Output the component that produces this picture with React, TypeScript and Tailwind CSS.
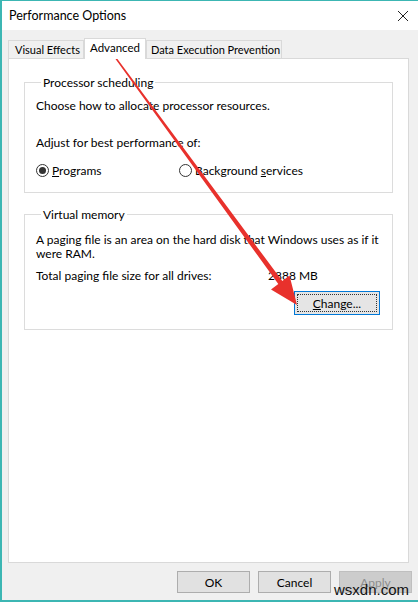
const font = "font-['Lato','Liberation_Sans',sans-serif]";

function Radio({ checked }: { checked?: boolean }) {
  return (
    <span className="flex h-[13px] w-[13px] items-center justify-center rounded-full border border-[#333] bg-white">
      {checked ? <span className="h-[7px] w-[7px] rounded-full bg-[#333]" /> : null}
    </span>
  );
}

function Button({ label, disabled }: { label: string; disabled?: boolean }) {
  return (
    <div
      className={
        disabled
          ? "flex h-[22px] w-[73px] items-center justify-center border border-[#bfbfbf] bg-[#cccccc] text-[#8c8c8c]"
          : "flex h-[22px] w-[73px] items-center justify-center border border-[#adadad] bg-[#e1e1e1]"
      }
    >
      {label}
    </div>
  );
}

export default function App() {
  return (
    <div
      className={`relative flex h-[602px] w-[418px] flex-col border-t border-b-2 border-l-2 border-[#3cb6b3] bg-[#f0f0f0] text-[12px] leading-[15px] text-black ${font}`}
    >
      {/* title bar */}
      <div className="flex h-[29px] items-center justify-between bg-white pl-[7px] pr-[8px]">
        <span className="text-[12.5px]">Performance Options</span>
        <svg width="12" height="12" viewBox="0 0 12 12" className="mr-[1px]">
          <path d="M1 1 L11 11 M11 1 L1 11" stroke="#222" strokeWidth="1" fill="none" />
        </svg>
      </div>

      {/* tabs */}
      <div className="ml-[6px] mt-[8px] flex h-[20px] items-end whitespace-nowrap text-[11px]">
        <div className="flex h-[18px] w-[76px] items-center border border-b-0 border-[#d9d9d9] bg-[#f0f0f0] pl-[6px]">
          Visual Effects
        </div>
        <div className="relative z-10 -mb-px flex h-[21px] w-[62px] items-center justify-center border border-b-0 border-[#d9d9d9] bg-white pb-[3px] text-[11.5px]">
          Advanced
        </div>
        <div className="flex h-[18px] w-[136px] items-center border border-b-0 border-[#d9d9d9] bg-[#f0f0f0] pl-[4px]">
          Data Execution Prevention
        </div>
      </div>

      {/* panel */}
      <div className="ml-[6px] mr-[9px] flex h-[505px] flex-col border border-[#d9d9d9] bg-white px-[15px] pt-[16px]">
        <fieldset className="h-[118px] border border-[#dcdcdc] pl-[11px]">
          <legend className="ml-[5px] px-[2px]">Processor scheduling</legend>
          <div className="mt-[8px]">Choose how to allocate processor resources.</div>
          <div className="mt-[22px]">Adjust for best performance of:</div>
          <div className="mt-[13px] flex items-center">
            <div className="flex w-[143px] items-center gap-[3px]">
              <Radio checked />
              <span>
                <span className="underline">P</span>rograms
              </span>
            </div>
            <div className="flex items-center gap-[3px]">
              <Radio />
              <span>
                Background <span className="underline">s</span>ervices
              </span>
            </div>
          </div>
        </fieldset>

        <fieldset className="mt-[14px] h-[123px] border border-[#dcdcdc] pl-[11px] pr-[12px]">
          <legend className="ml-[5px] px-[2px]">Virtual memory</legend>
          <div className="mt-[11px] leading-[14px]">
            A paging file is an area on the hard disk that Windows uses as if it were RAM.
          </div>
          <div className="mt-[7px] flex">
            <span className="w-[232px]">Total paging file size for all drives:</span>
            <span>2888 MB</span>
          </div>
          <div className="mt-[8px] flex justify-end">
            <div className="flex h-[24px] w-[86px] items-center justify-center border border-[#0078d7] bg-[#e5e5e5] p-[2px]">
              <div className="flex h-full w-full items-center justify-center border border-dotted border-[#333]">
                <span>
                  <span className="underline">C</span>hange...
                </span>
              </div>
            </div>
          </div>
        </fieldset>
      </div>

      {/* buttons */}
      <div className="mr-[6px] mt-[8px] flex justify-end gap-[8px]">
        <Button label="OK" />
        <Button label="Cancel" />
        <Button label="Apply" disabled />
      </div>

      {/* watermark */}
      <span className="absolute right-[9px] top-[580px] font-['Liberation_Sans',sans-serif] text-[15px] leading-[18px] text-[#111]">
        wsxdn.com
      </span>

      {/* red annotation arrow */}
      <svg className="pointer-events-none absolute left-[-2px] top-[-1px]" width="418" height="602">
        <polygon
          points="114.4,57.45 115.6,56.55 282.3,281 289.5,275.5 297,305 271,289.5 278.3,284"
          fill="#e8312c"
        />
      </svg>
    </div>
  );
}
